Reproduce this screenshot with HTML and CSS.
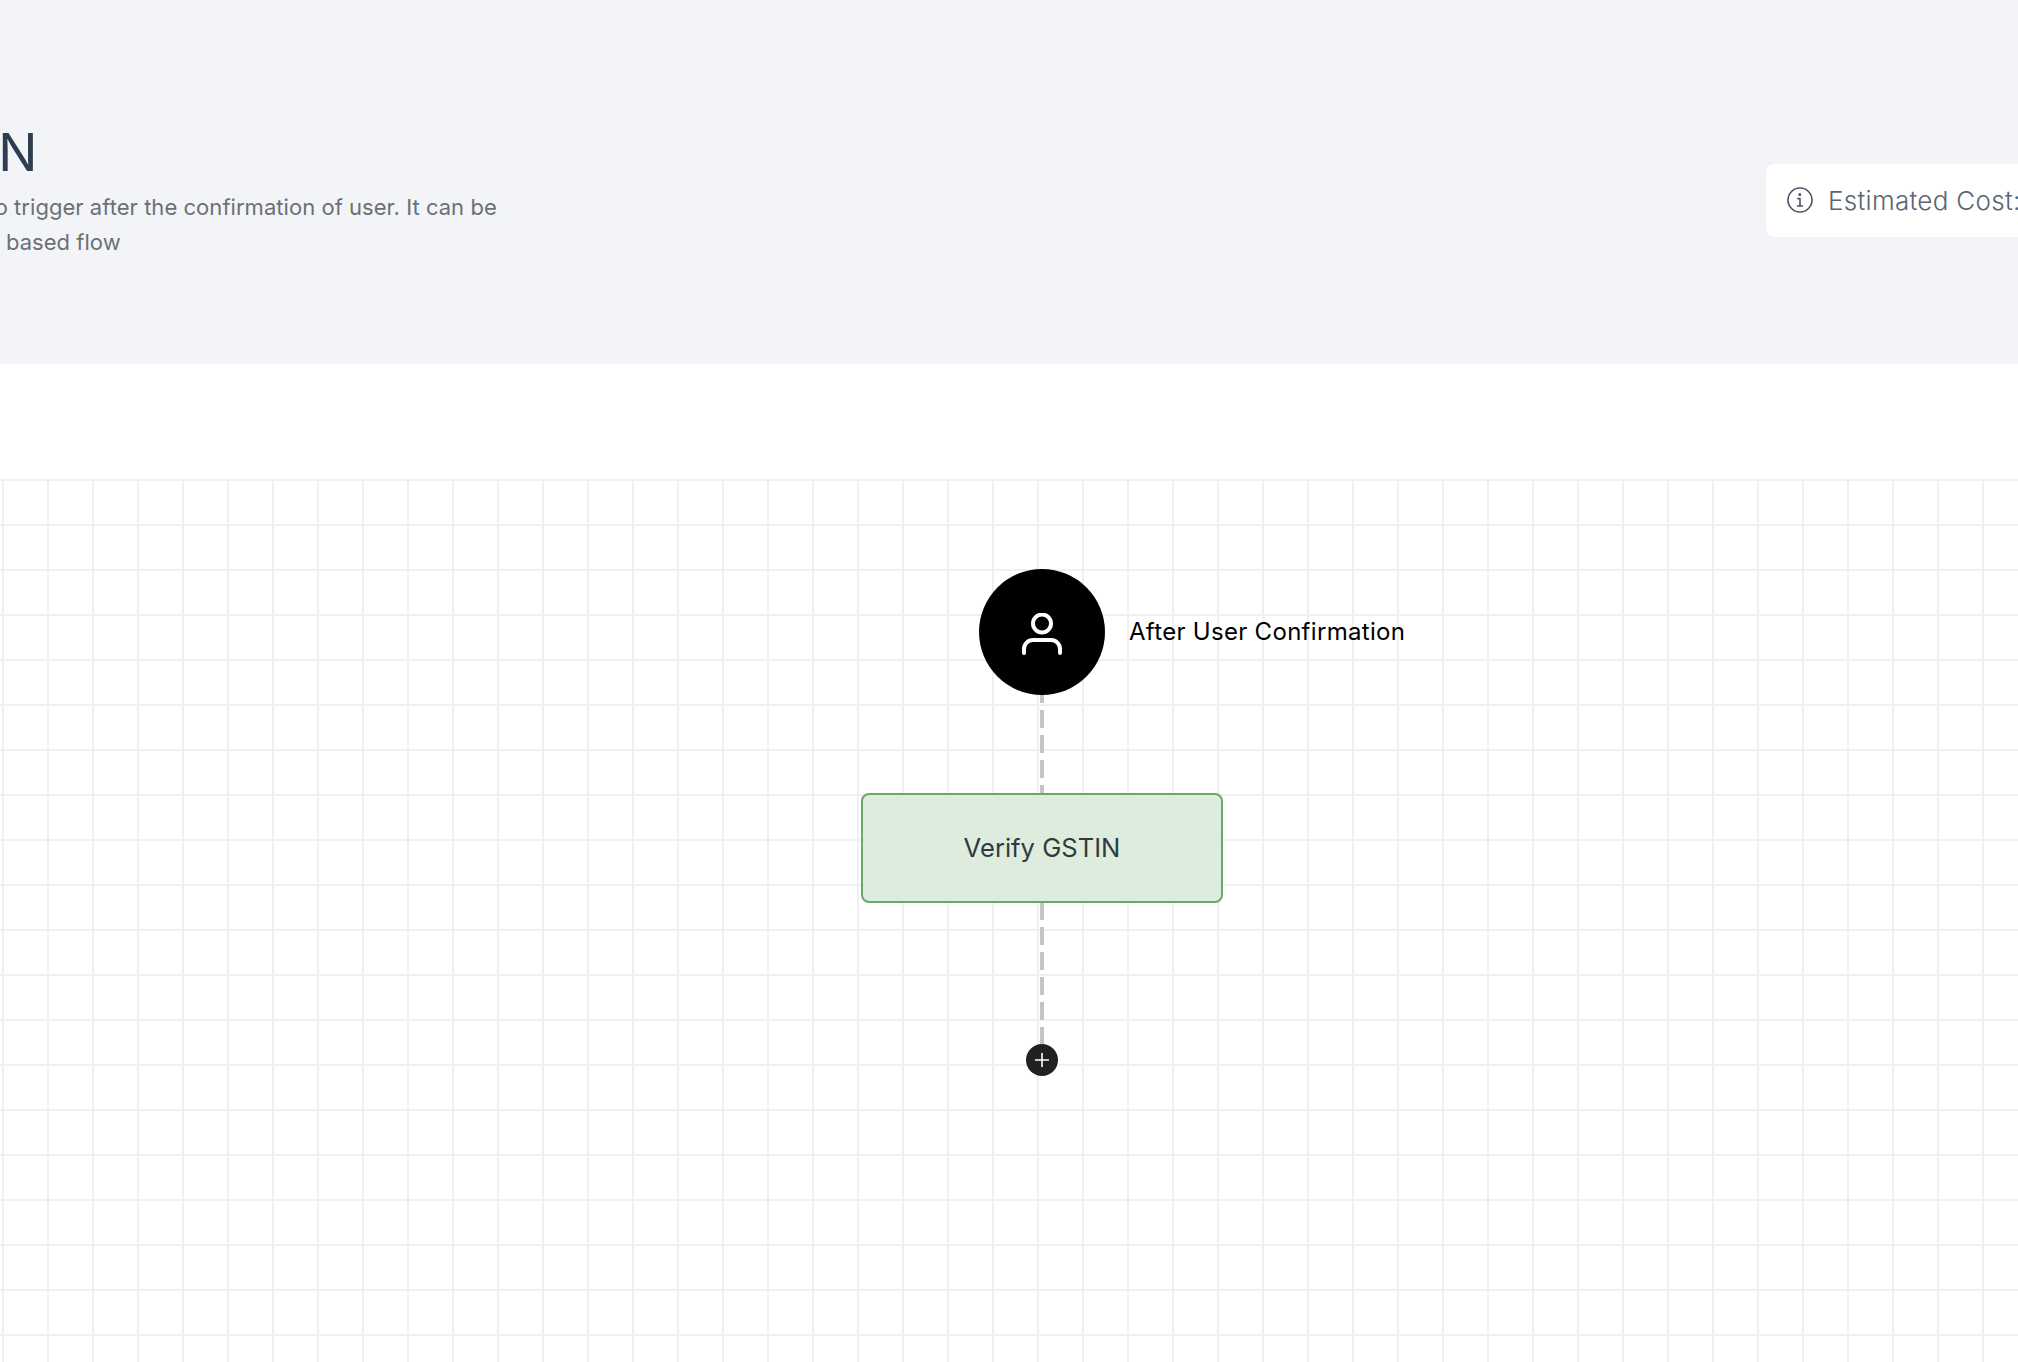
FILE: index.html
```html
<!DOCTYPE html>
<html lang="en">
<head>
<meta charset="utf-8">
<title>Verify GSTIN</title>
<link rel="stylesheet" href="styles.css">
</head>
<body>
<main class="page">
  <header class="banner">
    <div class="intro">
      <h1 class="intro-title">Verify GSTIN</h1>
      <p class="intro-text">This verification action is to trigger after the confirmation of user. It can be<br>used for any user approval based flow</p>
    </div>
    <div class="cost">
      <svg class="cost-icon" viewBox="0 0 26 26" fill="none" stroke="#4b5563" stroke-width="1.6" stroke-linecap="round" stroke-linejoin="round">
        <circle cx="13" cy="13" r="12"/>
        <path d="M10.8 11.6H13V19M10.5 19h5"/>
        <circle cx="12.8" cy="7.6" r="0.7" fill="#4b5563"/>
      </svg>
      <span class="cost-label">Estimated Cost: 10 Credits</span>
    </div>
  </header>
  <section class="canvas">
    <div class="flow">
      <div class="trigger">
        <svg class="trigger-icon" viewBox="0 0 40 42" fill="none" stroke="#fff" stroke-width="4" stroke-linecap="round" stroke-linejoin="round">
          <circle cx="20" cy="10.5" r="9"/>
          <path d="M2 40v-4a9 9 0 0 1 9-9h18a9 9 0 0 1 9 9v4"/>
        </svg>
        <span class="trigger-label">After User Confirmation</span>
      </div>
      <div class="link link-short"></div>
      <div class="step">Verify GSTIN</div>
      <div class="link link-long"></div>
      <button class="add" type="button" aria-label="Add step">
        <svg class="add-icon" viewBox="0 0 14 14" stroke="#fff" stroke-width="1.6"><path d="M7 0v14M0 7h14"/></svg>
      </button>
    </div>
  </section>
</main>
</body>
</html>
```
FILE: styles.css
```css
html, body {
  margin: 0;
  padding: 0;
  height: 100%;
  background: #fff;
  overflow: hidden;
}
.page {
  width: 2018px;
  height: 1362px;
  display: flex;
  flex-direction: column;
  overflow: hidden;
  font-family: Inter, "Liberation Sans", sans-serif;
}
.banner {
  height: 364px;
  flex: none;
  background: #f3f4f8;
  display: flex;
  justify-content: space-between;
  padding: 121px 0 0 0;
  box-sizing: border-box;
}
.intro {
  margin-left: -281px;
  flex: none;
}
.intro-title {
  margin: 0;
  font-size: 52px;
  line-height: 63px;
  font-weight: 400;
  color: #2c3e50;
  white-space: nowrap;
}
.intro-text {
  margin: 6px 0 0;
  padding-left: 2px;
  font-size: 22px;
  line-height: 35px;
  letter-spacing: 0.04px;
  color: #6b7075;
  white-space: nowrap;
}
.cost {
  flex: none;
  width: 400px;
  height: 73px;
  margin: 43px -148px 0 0;
  padding: 0 0 1px 21px;
  box-sizing: border-box;
  background: #fff;
  border-radius: 8px;
  display: flex;
  align-items: center;
  gap: 15px;
}
.cost-icon {
  width: 26px;
  height: 26px;
  flex: none;
}
.cost-label {
  font-size: 26px;
  font-weight: 300;
  letter-spacing: 0.3px;
  color: #5a6570;
  white-space: nowrap;
}
.canvas {
  flex: 1;
  margin-top: 115px;
  padding: 90px 0 0 66px;
  background-color: #fff;
  background-image:
    linear-gradient(#f0f0f0 2px, transparent 2px),
    linear-gradient(90deg, #f0f0f0 2px, transparent 2px);
  background-size: 45px 45px;
  background-position: 2px 0;
}
.flow {
  display: flex;
  flex-direction: column;
  align-items: center;
}
.trigger {
  position: relative;
  width: 126px;
  height: 126px;
  border-radius: 50%;
  background: #000;
  display: flex;
  align-items: center;
  justify-content: center;
}
.trigger-icon {
  width: 40px;
  height: 42px;
  margin-top: 4px;
}
.trigger-label {
  position: absolute;
  left: 150px;
  top: 50%;
  transform: translateY(-50%);
  font-size: 24px;
  letter-spacing: 0.3px;
  line-height: 1;
  color: #000;
  white-space: nowrap;
}
.link {
  width: 4px;
  background-image: linear-gradient(#c4c4c4 18px, transparent 18px);
  background-size: 4px 25px;
}
.link-short {
  height: 98px;
  background-position: 0 -10px;
}
.link-long {
  height: 141px;
  background-position: 0 -1px;
}
.step {
  width: 362px;
  height: 110px;
  box-sizing: border-box;
  padding-bottom: 2px;
  background: #deecde;
  border: 2px solid #6aa964;
  border-radius: 8px;
  display: flex;
  align-items: center;
  justify-content: center;
  font-size: 25.6px;
  color: #2f3a40;
}
.add {
  width: 32px;
  height: 32px;
  padding: 0;
  border: 0;
  border-radius: 50%;
  background: #212121;
  display: flex;
  align-items: center;
  justify-content: center;
}
.add-icon {
  width: 14px;
  height: 14px;
}
```
